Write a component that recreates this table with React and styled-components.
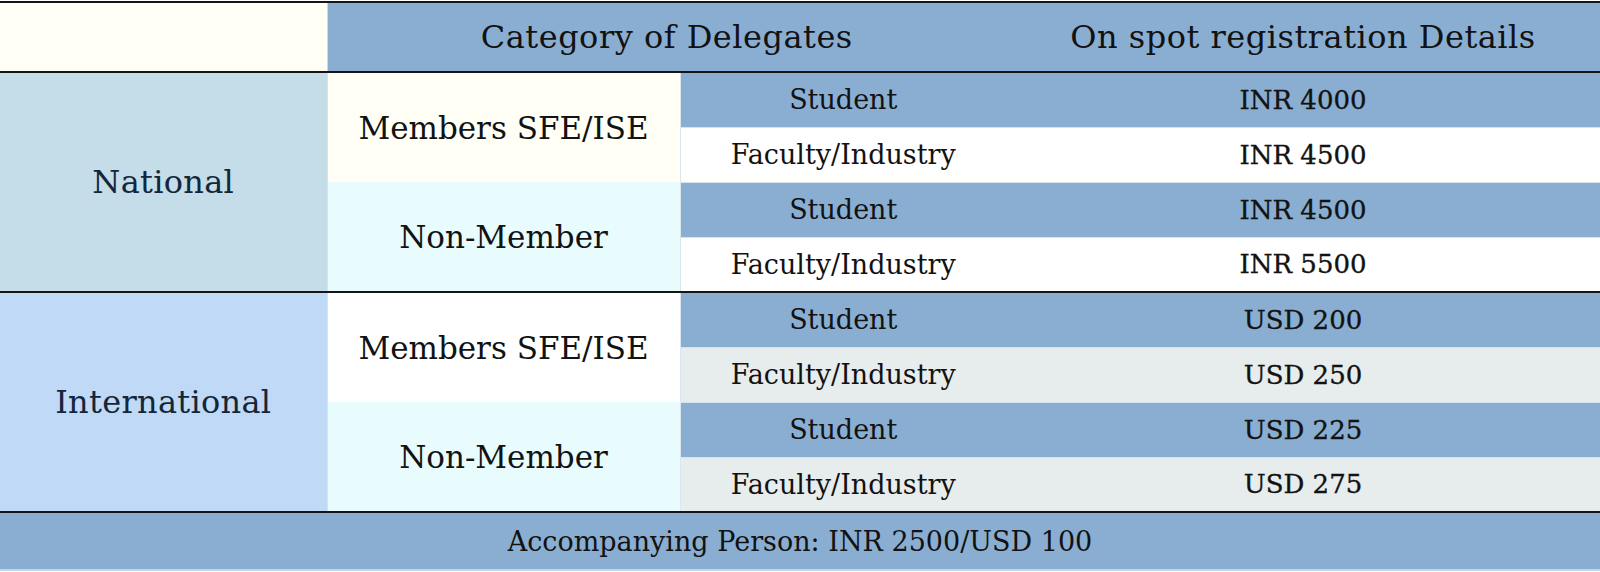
import React from "react";
import styled, { createGlobalStyle } from "styled-components";

const Global = createGlobalStyle`
  html, body { margin: 0; padding: 0; background: #ffffff; }
  body { font-family: "DejaVu Serif", serif; color: #121212; }
`;

const Page = styled.div`
  padding-top: 1px;
  width: 1600px;
`;

const Table = styled.table`
  width: 1600px;
  border-collapse: collapse;
  table-layout: fixed;
  border-top: 2px solid #151515;
`;

const Col = styled.col``;

const HeadRow = styled.tr`
  height: 70px;
  border-bottom: 2px solid #151515;
`;

const BlankHead = styled.th`
  background: #fffff6;
  border-right: 1px solid #c9daea;
`;

const HeadCell = styled.th`
  background: #8aaed1;
  font-weight: 400;
  font-size: 32px;
  letter-spacing: 0.5px;
  text-align: center;
  padding: 0;
`;

const BodyRow = styled.tr`
  height: 55px;
  border-bottom: ${(p) => (p.$groupEnd ? "2px solid #151515" : "none")};
`;

const GroupCell = styled.td`
  background: ${(p) => p.$bg};
  color: #14263a;
  font-size: 32px;
  letter-spacing: 0.3px;
  text-align: center;
  vertical-align: middle;
  border-right: 1px solid #d5e4f1;
  padding: 0;
`;

const MemberCell = styled.td`
  background: ${(p) => p.$bg};
  font-size: 31px;
  text-align: center;
  vertical-align: middle;
  padding: 0;
`;

const TypeCell = styled.td`
  background: ${(p) => p.$bg};
  font-size: 27px;
  text-align: center;
  vertical-align: middle;
  padding: 0;
  border-left: 1px solid #dbe6ef;
  border-top: 1px solid #d6e2ec;
`;

const PriceCell = styled.td`
  background: ${(p) => p.$bg};
  font-size: 26px;
  -webkit-text-stroke: 0.35px #121212;
  text-align: center;
  vertical-align: middle;
  padding: 0;
  border-top: 1px solid #d6e2ec;
`;

const FootRow = styled.tr`
  height: 58px;
`;

const FootCell = styled.td`
  background: #8aaed1;
  font-size: 27px;
  text-align: center;
  vertical-align: middle;
  padding: 0;
  border-bottom: 2px solid #c3d5e6;
`;

const BLUE = "#8aaed1";

const groups = [
  {
    name: "National",
    bg: "#c5dce9",
    altBg: "#ffffff",
    members: [
      { label: "Members SFE/ISE", bg: "#fffff6", prices: ["INR 4000", "INR 4500"] },
      { label: "Non-Member", bg: "#e8fcfe", prices: ["INR 4500", "INR 5500"] },
    ],
  },
  {
    name: "International",
    bg: "#bfd9f6",
    altBg: "#e7eced",
    members: [
      { label: "Members SFE/ISE", bg: "#ffffff", prices: ["USD 200", "USD 250"] },
      { label: "Non-Member", bg: "#e8fcfe", prices: ["USD 225", "USD 275"] },
    ],
  },
];

export default function App() {
  return (
    <Page>
      <Global />
      <Table>
        <colgroup>
          <Col style={{ width: 327 }} />
          <Col style={{ width: 353 }} />
          <Col style={{ width: 326 }} />
          <Col style={{ width: 594 }} />
        </colgroup>
        <thead>
          <HeadRow>
            <BlankHead />
            <HeadCell colSpan={2}>Category of Delegates</HeadCell>
            <HeadCell>On spot registration Details</HeadCell>
          </HeadRow>
        </thead>
        <tbody>
          {groups.map((g) =>
            g.members.map((m, mi) =>
              ["Student", "Faculty/Industry"].map((t, ti) => {
                const bg = ti === 0 ? BLUE : g.altBg;
                const last = mi === 1 && ti === 1;
                return (
                  <BodyRow key={g.name + mi + ti} $groupEnd={last}>
                    {mi === 0 && ti === 0 && (
                      <GroupCell rowSpan={4} $bg={g.bg}>
                        {g.name}
                      </GroupCell>
                    )}
                    {ti === 0 && (
                      <MemberCell rowSpan={2} $bg={m.bg}>
                        {m.label}
                      </MemberCell>
                    )}
                    <TypeCell $bg={bg}>{t}</TypeCell>
                    <PriceCell $bg={bg}>{m.prices[ti]}</PriceCell>
                  </BodyRow>
                );
              })
            )
          )}
          <FootRow>
            <FootCell colSpan={4}>Accompanying Person: INR 2500/USD 100</FootCell>
          </FootRow>
        </tbody>
      </Table>
    </Page>
  );
}
